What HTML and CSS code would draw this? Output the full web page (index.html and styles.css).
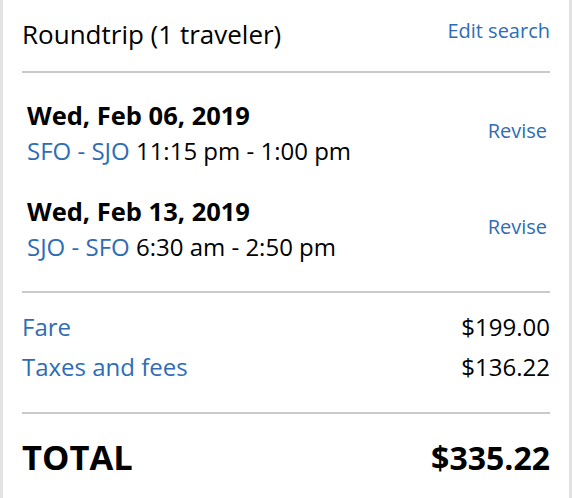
FILE: index.html
```html
<!DOCTYPE html>
<html>
<head>
<meta charset="utf-8">
<link rel="stylesheet" href="styles.css">
</head>
<body>
<div class="card">
  <div class="head">
    <div class="title">Roundtrip (1 traveler)</div>
    <a class="link edit">Edit search</a>
  </div>
  <div class="flights">
    <div class="flight">
      <div class="info">
        <div class="date">Wed, Feb 06, 2019</div>
        <div class="route"><span class="link">SFO - SJO</span> 11:15 pm - 1:00 pm</div>
      </div>
      <a class="link revise">Revise</a>
    </div>
    <div class="flight">
      <div class="info">
        <div class="date">Wed, Feb 13, 2019</div>
        <div class="route"><span class="link">SJO - SFO</span> 6:30 am - 2:50 pm</div>
      </div>
      <a class="link revise">Revise</a>
    </div>
  </div>
  <div class="prices">
    <div class="price-row"><span class="link">Fare</span><span>$199.00</span></div>
    <div class="price-row"><span class="link">Taxes and fees</span><span>$136.22</span></div>
  </div>
  <div class="total">
    <span class="total-label">TOTAL</span><span class="total-amount">$335.22</span>
  </div>
</div>
</body>
</html>
```
FILE: styles.css
```css
html, body {
  margin: 0;
  padding: 0;
  background: #fff;
}
body {
  font-family: "Open Sans", "Liberation Sans", sans-serif;
  color: #000;
}
.card {
  box-sizing: border-box;
  width: 572px;
  min-height: 498px;
  border-left: 3px solid #e3e3e3;
  border-right: 3px solid #e3e3e3;
  padding: 0 19px;
}
.link {
  color: #2e6db6;
  text-decoration: none;
}
.head {
  display: flex;
  justify-content: space-between;
  align-items: flex-start;
  padding: 15px 0 18px;
  border-bottom: 2px solid #cacaca;
}
.title {
  font-size: 26px;
  line-height: 38px;
}
.edit {
  font-size: 20px;
  line-height: 28px;
  padding-top: 2px;
}
.flights {
  display: flex;
  flex-direction: column;
  gap: 24px;
  padding: 24px 0 26px 5px;
  border-bottom: 2px solid #cacaca;
}
.flight {
  display: flex;
  justify-content: space-between;
  align-items: flex-start;
}
.date {
  font-size: 25.5px;
  font-weight: 700;
  line-height: 36px;
}
.route {
  font-size: 24px;
  line-height: 36px;
}
.revise {
  font-size: 20px;
  line-height: 28px;
  padding-top: 20px;
  padding-right: 3px;
}
.prices {
  padding: 14px 0 25px;
  border-bottom: 2px solid #cacaca;
}
.price-row {
  display: flex;
  justify-content: space-between;
  font-size: 24px;
  line-height: 40px;
}
.total {
  display: flex;
  justify-content: space-between;
  align-items: baseline;
  padding-top: 21px;
  font-weight: 700;
  line-height: 44px;
}
.total-label {
  font-size: 34.5px;
}
.total-amount {
  font-size: 32px;
}
```
